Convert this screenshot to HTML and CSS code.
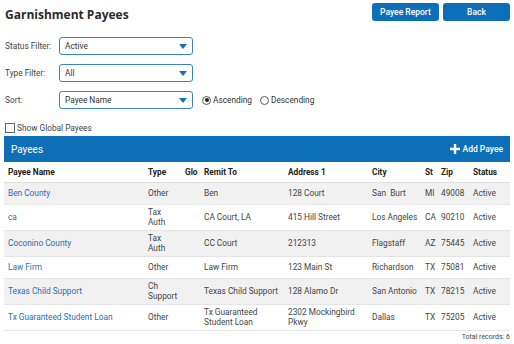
FILE: index.html
```html
<!DOCTYPE html>
<html lang="en">
<head>
    <meta charset="UTF-8">
    <title>Garnishment Payees</title>
    <link rel="stylesheet" href="styles.css">
</head>
<body>

    <div class="page-head">
        <h1>Garnishment Payees</h1>
        <div class="head-actions">
            <button class="btn">Payee Report</button>
            <button class="btn">Back</button>
        </div>
    </div>

    <div class="filters">
        <label>Status Filter:</label>
        <div class="select"><span>Active</span><svg width="8" height="5" viewBox="0 0 8 5"><path d="M0 0H8L4 5Z" fill="#1a6fb8"/></svg></div>
        <div></div>

        <label>Type Filter:</label>
        <div class="select"><span>All</span><svg width="8" height="5" viewBox="0 0 8 5"><path d="M0 0H8L4 5Z" fill="#1a6fb8"/></svg></div>
        <div></div>

        <label>Sort:</label>
        <div class="select"><span>Payee Name</span><svg width="8" height="5" viewBox="0 0 8 5"><path d="M0 0H8L4 5Z" fill="#1a6fb8"/></svg></div>
        <div class="sort-dir">
            <span class="radio checked"></span><span>Ascending</span>
            <span class="radio"></span><span>Descending</span>
        </div>
    </div>

    <div class="global">
        <span class="checkbox"></span><span>Show Global Payees</span>
    </div>

    <div class="panel-head">
        <span class="panel-title">Payees</span>
        <span class="add-payee">
            <svg width="10" height="10" viewBox="0 0 10 10"><path d="M3.8 0H6.2V3.8H10V6.2H6.2V10H3.8V6.2H0V3.8H3.8Z" fill="#fff"/></svg>
            Add Payee
        </span>
    </div>

    <table class="payees">
        <colgroup>
            <col style="width:140px">
            <col style="width:37px">
            <col style="width:19px">
            <col style="width:84px">
            <col style="width:84px">
            <col style="width:53px">
            <col style="width:16px">
            <col style="width:32px">
            <col style="width:41px">
        </colgroup>
        <thead>
            <tr>
                <th>Payee Name</th><th>Type</th><th>Glo</th><th>Remit To</th><th>Address 1</th><th>City</th><th>St</th><th>Zip</th><th>Status</th>
            </tr>
        </thead>
        <tbody>
            <tr class="alt">
                <td><a href="#">Ben County</a></td><td>Other</td><td></td><td>Ben</td><td>128 Court</td><td>San&nbsp; Burt</td><td>MI</td><td>49008</td><td>Active</td>
            </tr>
            <tr>
                <td><a href="#">ca</a></td><td>Tax<br>Auth</td><td></td><td>CA Court, LA</td><td>415 Hill Street</td><td>Los Angeles</td><td>CA</td><td>90210</td><td>Active</td>
            </tr>
            <tr class="alt">
                <td><a href="#">Coconino County</a></td><td>Tax<br>Auth</td><td></td><td>CC Court</td><td>212313</td><td>Flagstaff</td><td>AZ</td><td>75445</td><td>Active</td>
            </tr>
            <tr>
                <td><a href="#">Law Firm</a></td><td>Other</td><td></td><td>Law Firm</td><td>123 Main St</td><td>Richardson</td><td>TX</td><td>75081</td><td>Active</td>
            </tr>
            <tr class="alt">
                <td><a href="#">Texas Child Support</a></td><td>Ch<br>Support</td><td></td><td>Texas Child Support</td><td>128 Alamo Dr</td><td>San Antonio</td><td>TX</td><td>78215</td><td>Active</td>
            </tr>
            <tr>
                <td><a href="#">Tx Guaranteed Student Loan</a></td><td>Other</td><td></td><td>Tx Guaranteed<br>Student Loan</td><td>2302 Mockingbird<br>Pkwy</td><td>Dallas</td><td>TX</td><td>75205</td><td>Active</td>
            </tr>
        </tbody>
    </table>

    <div class="total">Total records: 6</div>

</body>
</html>
```

FILE: styles.css
```css
body {
    margin: 0;
    padding: 3px 4px 0 4px;
    font-family: Roboto, "Liberation Sans", sans-serif;
    font-size: 8.3px;
    color: #333;
    background: #fff;
}

/* Title and top buttons */
.page-head {
    display: flex;
    justify-content: space-between;
    align-items: flex-start;
}

h1 {
    margin: 4px 0 0 1px;
    font-family: "Open Sans", sans-serif;
    font-size: 12px;
    font-weight: 700;
    color: #2b2b2b;
    line-height: 15px;
}

.head-actions {
    display: flex;
    gap: 4px;
}

.btn {
    width: 67px;
    height: 18px;
    border: none;
    border-radius: 3px;
    background: #0d6fb8;
    color: #fff;
    font-family: Roboto, sans-serif;
    font-size: 8.5px;
    font-weight: 500;
    padding: 0;
}

/* Filters */
.filters {
    display: grid;
    grid-template-columns: 55px 134px 1fr;
    row-gap: 9px;
    align-items: center;
    margin-top: 15px;
}

.filters label {
    padding-left: 1px;
    color: #444;
}

.select {
    height: 16px;
    border: 1px solid #3b82c4;
    border-radius: 3px;
    display: flex;
    align-items: center;
    justify-content: space-between;
    padding: 0 5px 0 5px;
    color: #333;
}

.sort-dir {
    display: flex;
    align-items: center;
    padding-left: 9px;
    color: #333;
}

.radio {
    width: 7px;
    height: 7px;
    border: 1px solid #555;
    border-radius: 50%;
    margin-right: 2px;
    position: relative;
}

.radio + span {
    margin-right: 8px;
}

.radio.checked::after {
    content: "";
    position: absolute;
    left: 1.5px;
    top: 1.5px;
    width: 4px;
    height: 4px;
    border-radius: 50%;
    background: #222;
}

/* Global payees */
.global {
    display: flex;
    align-items: center;
    margin-top: 14px;
    padding-left: 1px;
    color: #444;
}

.checkbox {
    width: 8px;
    height: 8px;
    border: 1px solid #666;
    margin-right: 2px;
}

/* Blue panel header */
.panel-head {
    margin-top: 3px;
    height: 26px;
    background: #0d6fb8;
    color: #fff;
    display: flex;
    align-items: center;
    justify-content: space-between;
    padding: 0 7px;
}

.panel-title {
    font-size: 10px;
}

.add-payee {
    display: flex;
    align-items: center;
    gap: 3px;
    font-size: 8.5px;
    font-weight: 500;
}

/* Table */
.payees {
    width: 506px;
    border-collapse: collapse;
    table-layout: fixed;
}

.payees th {
    text-align: left;
    font-weight: 700;
    color: #222;
    height: 14px;
    padding: 3px 4px;
    border-bottom: 1px solid #ddd;
}

.payees td {
    height: 15px;
    line-height: 9.5px;
    padding: 3px 4px;
    border-bottom: 1px solid #e4e4e4;
    color: #444;
    white-space: nowrap;
}

.payees tr.alt td {
    background: #f1f1f1;
}

.payees a {
    color: #2a6db5;
    text-decoration: none;
}

.total {
    text-align: right;
    font-size: 7px;
    color: #444;
    margin-top: 2px;
}
```
